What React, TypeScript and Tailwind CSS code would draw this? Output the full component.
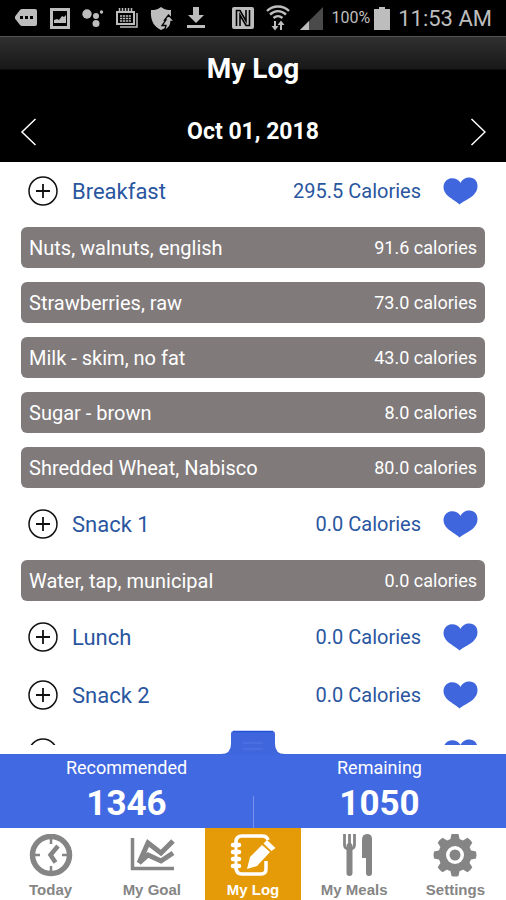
import clsx from 'clsx';
import {ReactNode} from 'react';

interface Food {
  name: string;
  calories: string;
}

interface MealProps {
  name: string;
  calories: string;
  foods: Food[];
}

const meals: MealProps[] = [
  {
    name: 'Breakfast',
    calories: '295.5',
    foods: [
      {name: 'Nuts, walnuts, english', calories: '91.6'},
      {name: 'Strawberries, raw', calories: '73.0'},
      {name: 'Milk - skim, no fat', calories: '43.0'},
      {name: 'Sugar - brown', calories: '8.0'},
      {name: 'Shredded Wheat, Nabisco', calories: '80.0'},
    ],
  },
  {name: 'Snack 1', calories: '0.0', foods: [{name: 'Water, tap, municipal', calories: '0.0'}]},
  {name: 'Lunch', calories: '0.0', foods: []},
  {name: 'Snack 2', calories: '0.0', foods: []},
];

const PlusIcon = () => (
  <svg width="30" height="30" viewBox="0 0 30 30" fill="none" stroke="#111">
    <circle cx="15" cy="15" r="14" strokeWidth="1.5"/>
    <path d="M15 8v14M8 15h14" strokeWidth="1.8"/>
  </svg>
);

const HeartIcon = () => (
  <svg width="35" height="28" viewBox="0 0 35 28" fill="#3f66dd">
    <path d="M17.500 6C16 3 12.500 1 8.500 1.200 3.500 1.500.5 5.500.5 10.500.7 17 7 20.500 12 24c2 1.300 3 2.200 4.500 3.500C18 26 20 25 22.500 23.500 27 21 34.300 17 34.500 9.500 34.600 4 31.500.5 26.500.5 22.500.5 19 2.500 17.500 6z"/>
  </svg>
);

const StatusBar = () => (
  <div className="flex h-9 shrink-0 items-center bg-black px-[14px] text-[#bdbdbd]">
    <div className="flex items-center gap-3">
      <svg width="24" height="20" viewBox="0 0 24 20" fill="currentColor">
        <path d="M8 1h13q2 0 2 2v13q0 2-2 2H8q-1 0-2-1L1 10.500v-2L6 2q1-1 2-1z"/>
        <path d="M6 8h3v3H6zM11 8h3v3h-3zM16 8h3v3h-3z" fill="#000"/>
      </svg>
      <svg width="20" height="21" viewBox="0 0 20 21" fill="none" stroke="currentColor">
        <path d="M1.500 1.500h17v18h-17z" strokeWidth="3"/>
        <path d="M4 15v-3l3-1 2 1 3-4 2 1 2-2v8z" fill="currentColor" stroke="none"/>
      </svg>
      <svg width="22" height="20" viewBox="0 0 22 20" fill="currentColor">
        <circle cx="5" cy="6" r="4.700"/>
        <circle cx="14" cy="8" r="3"/>
        <circle cx="19.500" cy="4" r="1.700"/>
        <circle cx="14" cy="15.500" r="3.500"/>
      </svg>
      <svg width="22" height="20" viewBox="0 0 22 20" fill="none" stroke="currentColor">
        <path d="M1 4h17v12H1z" strokeWidth="2"/>
        <path d="M3.500 0v5M6.500 0v5M9.500 0v5M12.500 0v5M15.500 0v5" strokeWidth="1.500"/>
        <path d="M4 8h11M4 10.500h11M4 13h11" strokeWidth="1.700" strokeDasharray="2.200 .7"/>
        <path d="M21 5v14H4" strokeWidth="1.500"/>
      </svg>
      <svg width="25" height="25" viewBox="0 0 25 25" fill="currentColor">
        <path d="M11 1c3 2.500 6 3 10 3v7c0 6-4 11-10 13C5 21 0 16 1 4c4 0 7-.5 10-3z"/>
        <path d="M18.500 9l6 6.500h-3.500c0 4-2 7-6.500 9 .5-2 1.500-3.500 1.500-5h-4l4-5.500h-1.500z" stroke="#000" strokeWidth="1.300"/>
      </svg>
      <svg width="18" height="22" viewBox="0 0 18 22" fill="currentColor">
        <path d="M6 0h6v8h5l-8 8-8-8h5zM0 18h18v3H0z"/>
      </svg>
    </div>
    <div className="ml-auto flex items-center">
      <svg width="22" height="22" viewBox="0 0 22 22">
        <rect width="22" height="22" rx="2" fill="currentColor"/>
        <path d="M4.500 19V3.500h3.500L14 14V3M17.500 3v15.500H14L8 8v11" fill="none" stroke="#000" strokeWidth="1.600"/>
      </svg>
      <svg className="ml-3" width="24" height="26" viewBox="0 0 24 26" fill="none" stroke="currentColor">
        <path d="M1 6C7 0 17 0 23 6M4 9.500c5-4.500 11-4.500 16 0M7.500 13c3-2.500 6-2.500 9 0" strokeWidth="2.400"/>
        <path d="M9 16v7M15 25v-7" strokeWidth="2"/>
        <path d="M5.500 21h7L9 25.500zM11.500 20h7L15 15.500z" fill="currentColor" stroke="none"/>
      </svg>
      <svg className="ml-[10px]" width="23" height="23" viewBox="0 0 23 23">
        <path d="M23 0v23H0z" fill="#4a4a4a"/>
        <path d="M9 14v9H0z" fill="currentColor"/>
      </svg>
      <span className="ml-2 text-base">100%</span>
      <svg className="ml-1" width="16" height="23" viewBox="0 0 16 23" fill="currentColor">
        <path d="M5 0h6v2h5v21H0V2h5z"/>
      </svg>
      <span className="ml-2 text-[22px]">11:53 AM</span>
    </div>
  </div>
);

const Header = () => (
  <header className="shrink-0 bg-black text-white">
    <div className="h-[66px] border-t border-[#555] bg-[linear-gradient(#303030,#181818_32px,#000_33px)] text-center">
      <h1 className="pt-4 text-[28px] leading-8 font-bold">My Log</h1>
    </div>
    <div className="flex h-[60px] items-center justify-between px-5">
      <button type="button" aria-label="Previous day">
        <svg width="18" height="28" viewBox="0 0 18 28" fill="none" stroke="#fff" strokeWidth="1.500">
          <path d="M15.500 1L2 14l13.500 13"/>
        </svg>
      </button>
      <h2 className="text-[23px] leading-7 font-bold">Oct 01, 2018</h2>
      <button type="button" aria-label="Next day">
        <svg width="18" height="28" viewBox="0 0 18 28" fill="none" stroke="#fff" strokeWidth="1.500">
          <path d="M3.500 1L17 14 3.500 27"/>
        </svg>
      </button>
    </div>
  </header>
);

const Meal = (props: MealProps) => (
  <section>
    <div className="flex h-[58px] items-center px-7 text-[#2a569f]">
      <button type="button" aria-label={'Add to ' + props.name}>
        <PlusIcon/>
      </button>
      <h3 className="ml-[14px] flex-1 text-[22px]">{props.name}</h3>
      <span className="text-xl">{props.calories} Calories</span>
      <button type="button" className="ml-[22px]" aria-label={'Favorite ' + props.name}>
        <HeartIcon/>
      </button>
    </div>
    <ul>
      {props.foods.map((food) => (
        <li key={food.name} className="px-[21px] py-[7px]">
          <div className="flex h-[41px] items-center justify-between rounded-md bg-[#807a7b] px-2 text-white">
            <span className="text-xl">{food.name}</span>
            <span className="text-lg">{food.calories} calories</span>
          </div>
        </li>
      ))}
    </ul>
  </section>
);

const Total = (props: { label: string, value: number }) => (
  <div className="flex-1 text-center">
    <div className="text-lg leading-7">{props.label}</div>
    <div className="text-[35px] leading-11 font-bold">{props.value}</div>
  </div>
);

const Totals = () => (
  <div className="relative mt-[9px] flex h-[74px] shrink-0 bg-[#4169e1] text-white">
    <button type="button" className="absolute -top-6 left-1/2 -translate-x-1/2" aria-label="Show totals">
      <svg width="64" height="25" viewBox="0 0 64 25">
        <path d="M0 24q10 0 10-10V4q0-3 3-3h38q3 0 3 3v10q0 10 10 10v1H0z" fill="#3f66dd"/>
        <path d="M12 1.500h40" stroke="#2454d6" strokeWidth="1.500"/>
        <path d="M22 13h20M22 19h20" stroke="#5577e6"/>
      </svg>
    </button>
    <Total label="Recommended" value={1346}/>
    <div className="absolute bottom-0 left-1/2 h-8 w-px bg-[#7891ea]"/>
    <Total label="Remaining" value={1050}/>
  </div>
);

const NavItem = (props: { label: string, active?: boolean, children: ReactNode }) => (
  <a href="#" aria-current={props.active ? 'page' : undefined} className="flex-1 px-[3px]">
    <div
      className={clsx(
        'flex h-full flex-col items-center pt-1.5',
        props.active ? 'bg-[#e59a08] text-white' : 'text-[#858585]',
      )}
    >
      <svg className="shrink-0" width="46" height="44" viewBox="0 0 46 44" fill="none" stroke="currentColor">
        {props.children}
      </svg>
      <span className="font-['Liberation_Sans',sans-serif] text-[15px] leading-6 font-bold">{props.label}</span>
    </div>
  </a>
);

const NavBar = () => (
  <nav className="flex h-[72px] shrink-0 overflow-hidden bg-white">
    <NavItem label="Today">
      <circle cx="23" cy="21" r="18.500" strokeWidth="5.500"/>
      <path d="M23 5v5M23 32v5M7 21h5M34 21h5" strokeWidth="2.500"/>
      <path d="M30 12l-7.500 9 5 7.500" strokeWidth="4.500"/>
    </NavItem>
    <NavItem label="My Goal">
      <path d="M3.500 4v30.500H45" strokeWidth="3.500"/>
      <path d="M10 29l9-20 13 10L44 7" strokeWidth="5"/>
      <path d="M10 29l9-8 13 6 12-8" strokeWidth="5"/>
    </NavItem>
    <NavItem label="My Log" active>
      <path d="M6 10V8q0-6 6-6h20q5 0 6 4M6 33q0 7 6 7h19q5 0 5-5v-8" strokeWidth="3.500"/>
      <path d="M6 8v28" strokeWidth="3"/>
      <path d="M3 11h6M3 18h6M3 25h6M3 32h6" strokeWidth="4.500" strokeLinecap="round"/>
      <path d="M17 35l3-12L32 11l8 7-13 14zM33.500 9.500L37 6l8.500 8-4 3z" fill="currentColor" stroke="none"/>
    </NavItem>
    <NavItem label="My Meals">
      <path d="M13.500 0v11q0 4 5 4 5 0 5-4V0M18.500 0v13" strokeWidth="2.800"/>
      <path d="M18.500 12v27" strokeWidth="6" strokeLinecap="round"/>
      <path d="M31 24V6q0-6 5-6 5 0 5 5v34q0 3-3 3t-3-3V24z" fill="currentColor" stroke="none"/>
    </NavItem>
    <NavItem label="Settings">
      <circle cx="23" cy="21" r="12" strokeWidth="9"/>
      <g fill="currentColor" stroke="none">
        {[0, 45, 90, 135, 180, 225, 270, 315].map((angle) => (
          <path key={angle} d="M18 7l1.500-7q3.500-1 7 0L28 7z" transform={`rotate(${angle} 23 21)`}/>
        ))}
      </g>
      <circle cx="23" cy="21" r="9" fill="#fff" stroke="none"/>
      <circle cx="23" cy="21" r="5.500" fill="currentColor" stroke="none"/>
    </NavItem>
  </nav>
);

export default function App() {
  return (
    <div className="flex h-screen flex-col bg-white font-[Roboto,sans-serif]">
      <StatusBar/>
      <Header/>
      <main className="min-h-0 flex-1 overflow-hidden">
        {meals.map((meal) => (
          <Meal key={meal.name} {...meal}/>
        ))}
        <div className="flex h-[58px] items-center justify-between px-7">
          <PlusIcon/>
          <HeartIcon/>
        </div>
      </main>
      <Totals/>
      <NavBar/>
    </div>
  );
}
